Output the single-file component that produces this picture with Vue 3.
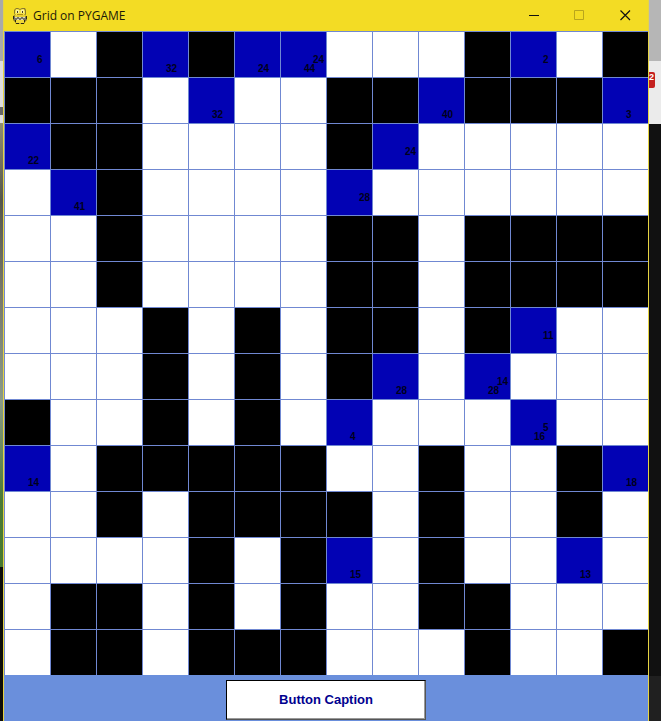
<script setup>
// '#' is a wall, '.' an empty square, 'c' a clue square
const layout = [
  'c.#c#cc...#c.#',
  '###.c..##c###c',
  'c##....#c.....',
  '.c#....c......',
  '..#....##.####',
  '..#....##.####',
  '...#.#.##.#c..',
  '...#.#.#c.c...',
  '#..#.#.c...c..',
  'c.#####..#..#c',
  '..#.####.#..#.',
  '....#.#c.#..c.',
  '.##.#.#..##...',
  '.##.###...#..#',
]

const clues = {
  '0-0': { across: 6 },
  '0-3': { down: 32 },
  '0-5': { down: 24 },
  '0-6': { down: 44, across: 24 },
  '0-11': { across: 2 },
  '1-4': { down: 32 },
  '1-9': { down: 40 },
  '1-13': { down: 3 },
  '2-0': { down: 22 },
  '2-8': { across: 24 },
  '3-1': { down: 41 },
  '3-7': { across: 28 },
  '6-11': { across: 11 },
  '7-8': { down: 28 },
  '7-10': { down: 28, across: 14 },
  '8-7': { down: 4 },
  '8-11': { down: 16, across: 5 },
  '9-0': { down: 14 },
  '9-13': { down: 18 },
  '11-7': { down: 15 },
  '11-12': { down: 13 },
}

const kinds = { '#': 'wall', '.': 'open', c: 'clue' }
const cells = layout.flatMap((row, r) =>
  [...row].map((mark, c) => ({ id: `${r}-${c}`, kind: kinds[mark], ...clues[`${r}-${c}`] }))
)
</script>

<template>
  <div class="desktop">
    <div class="backdrop backdrop-left"></div>
    <main class="window">
      <header class="titlebar">
        <svg class="logo" width="16" height="18" viewBox="0 0 16 18" aria-hidden="true">
          <path d="M4 1h2l2 1 2-1h3l1 2v4l-1 2 2 1v3l-2 2v1l-2 1H9l-1-1-1 1H4l-1-2-2-2v-4l2-1-1-2V3z" fill="#8a7a2c" />
          <path d="M4 2h2l2 1 2-1h2l1 2v3l-2 2H5L3 7V4z" fill="#f6e34a" />
          <path d="M4 3h3v3H4zM9 3h3v3H9z" fill="#faf0a0" />
          <path d="M5 4h1v2H5zM10 4h1v2h-1z" fill="#4a4018" />
          <path d="M5 7h6v1H5z" fill="#b48e18" />
          <path d="M3 8h10v2H3z" fill="#e8cf34" />
          <path d="M2 10h12v3H2z" fill="#777464" />
          <path d="M3 10h2v1H3zM7 10h2v1H7zM11 10h2v1h-2zM5 12h2v1H5zM9 12h2v1H9z" fill="#d8d5bd" />
          <path d="M1 9h1v3H1zM14 9h1v3h-1zM4 16h3v1H4zM9 16h3v1H9zM3 13h1v2H3zM12 13h1v2h-1z" fill="#2d2812" />
          <path d="M4 13h8v3H4z" fill="#f1d936" />
        </svg>
        <h1 class="title">Grid on PYGAME</h1>
        <button class="control" type="button" aria-label="Minimize">
          <svg width="11" height="11" viewBox="0 0 11 11"><path d="M1 5.500h10" stroke="#111" /></svg>
        </button>
        <button class="control" type="button" aria-label="Maximize" disabled>
          <svg width="11" height="11" viewBox="0 0 11 11"><path d="M.5.5h9v9h-9z" fill="none" stroke="#b9a51c" /></svg>
        </button>
        <button class="control" type="button" aria-label="Close">
          <svg width="11" height="11" viewBox="0 0 11 11"><path d="M.5.5L10 10M10 .5L.5 10" stroke="#111" stroke-width="1.2" /></svg>
        </button>
      </header>

      <section class="board">
        <div v-for="cell in cells" :key="cell.id" class="cell" :class="cell.kind">
          <span v-if="cell.across" class="number across">{{ cell.across }}</span>
          <span v-if="cell.down" class="number down">{{ cell.down }}</span>
        </div>
      </section>

      <footer class="footer">
        <button class="caption-button" type="button">Button Caption</button>
      </footer>
    </main>
    <div class="backdrop backdrop-right">
      <span class="badge">2</span>
    </div>
  </div>
</template>

<style>
body {
  margin: 0;
  background: #111;
}
</style>

<style scoped>
.desktop {
  display: grid;
  grid-template-columns: 3px minmax(0, 1fr) 12px;
  min-height: 100vh;
  overflow: hidden;
}

.backdrop-left {
  background: linear-gradient(
    #aaa 0 61px,
    #dedede 61px 107px,
    #666 107px 115px,
    #dedede 115px 123px,
    #8f8d72 123px,
    #55564a 200px,
    #77776a 290px,
    #8a9a88 400px,
    #4b7a35 500px,
    #47782f 567px,
    #0c0c08 567px
  );
}

.backdrop-right {
  padding-top: 72px;
  background: linear-gradient(#b6b6b6 0 61px, #ebebeb 61px 124px, #111 124px 676px, #202020 676px);
}

.badge {
  display: block;
  width: 6px;
  height: 16px;
  overflow: hidden;
  border-radius: 0 2px 2px 0;
  background: #c4201f;
  color: #fff;
  font: bold 9px/11px "Liberation Sans", sans-serif;
}

.window {
  display: flex;
  flex-direction: column;
  border: solid #e6d443;
  border-width: 0 1px;
  background: #6a8fdc;
}

.titlebar {
  display: flex;
  align-items: center;
  height: 31px;
  padding-left: 8px;
  background: #f3dc24;
}

.title {
  flex: 1;
  margin: 0 0 0 5px;
  color: #1c1a08;
  font: 12px/16px "Open Sans", "Noto Sans", sans-serif;
  white-space: nowrap;
}

.control {
  display: flex;
  align-items: center;
  justify-content: center;
  width: 46px;
  height: 31px;
  padding: 0;
  border: 0;
  background: transparent;
}

.board {
  display: grid;
  grid-template-columns: repeat(14, minmax(0, 1fr));
}

.cell {
  position: relative;
  box-sizing: border-box;
  aspect-ratio: 1;
  border: solid #7088d2;
  border-width: 1px 0 0 1px;
}

.wall {
  background: #000;
}

.open {
  background: #fff;
}

.clue {
  background: #0202b4;
}

.number {
  position: absolute;
  color: #00001c;
  font: bold 10px/9px "Liberation Sans", Arial, sans-serif;
}

.across {
  top: 51%;
  left: 71%;
}

.down {
  top: 71%;
  left: 51%;
}

.footer {
  display: flex;
  flex: 1;
  align-items: flex-start;
  justify-content: center;
  padding-top: 5px;
}

.caption-button {
  width: 200px;
  height: 40px;
  padding: 0;
  border: 1px solid;
  border-color: #000 #555 #555 #000;
  background: #fff;
  box-shadow: inset -1px -1px #999;
  color: #00008f;
  font: bold 13px/16px "Liberation Sans", Arial, sans-serif;
}
</style>
